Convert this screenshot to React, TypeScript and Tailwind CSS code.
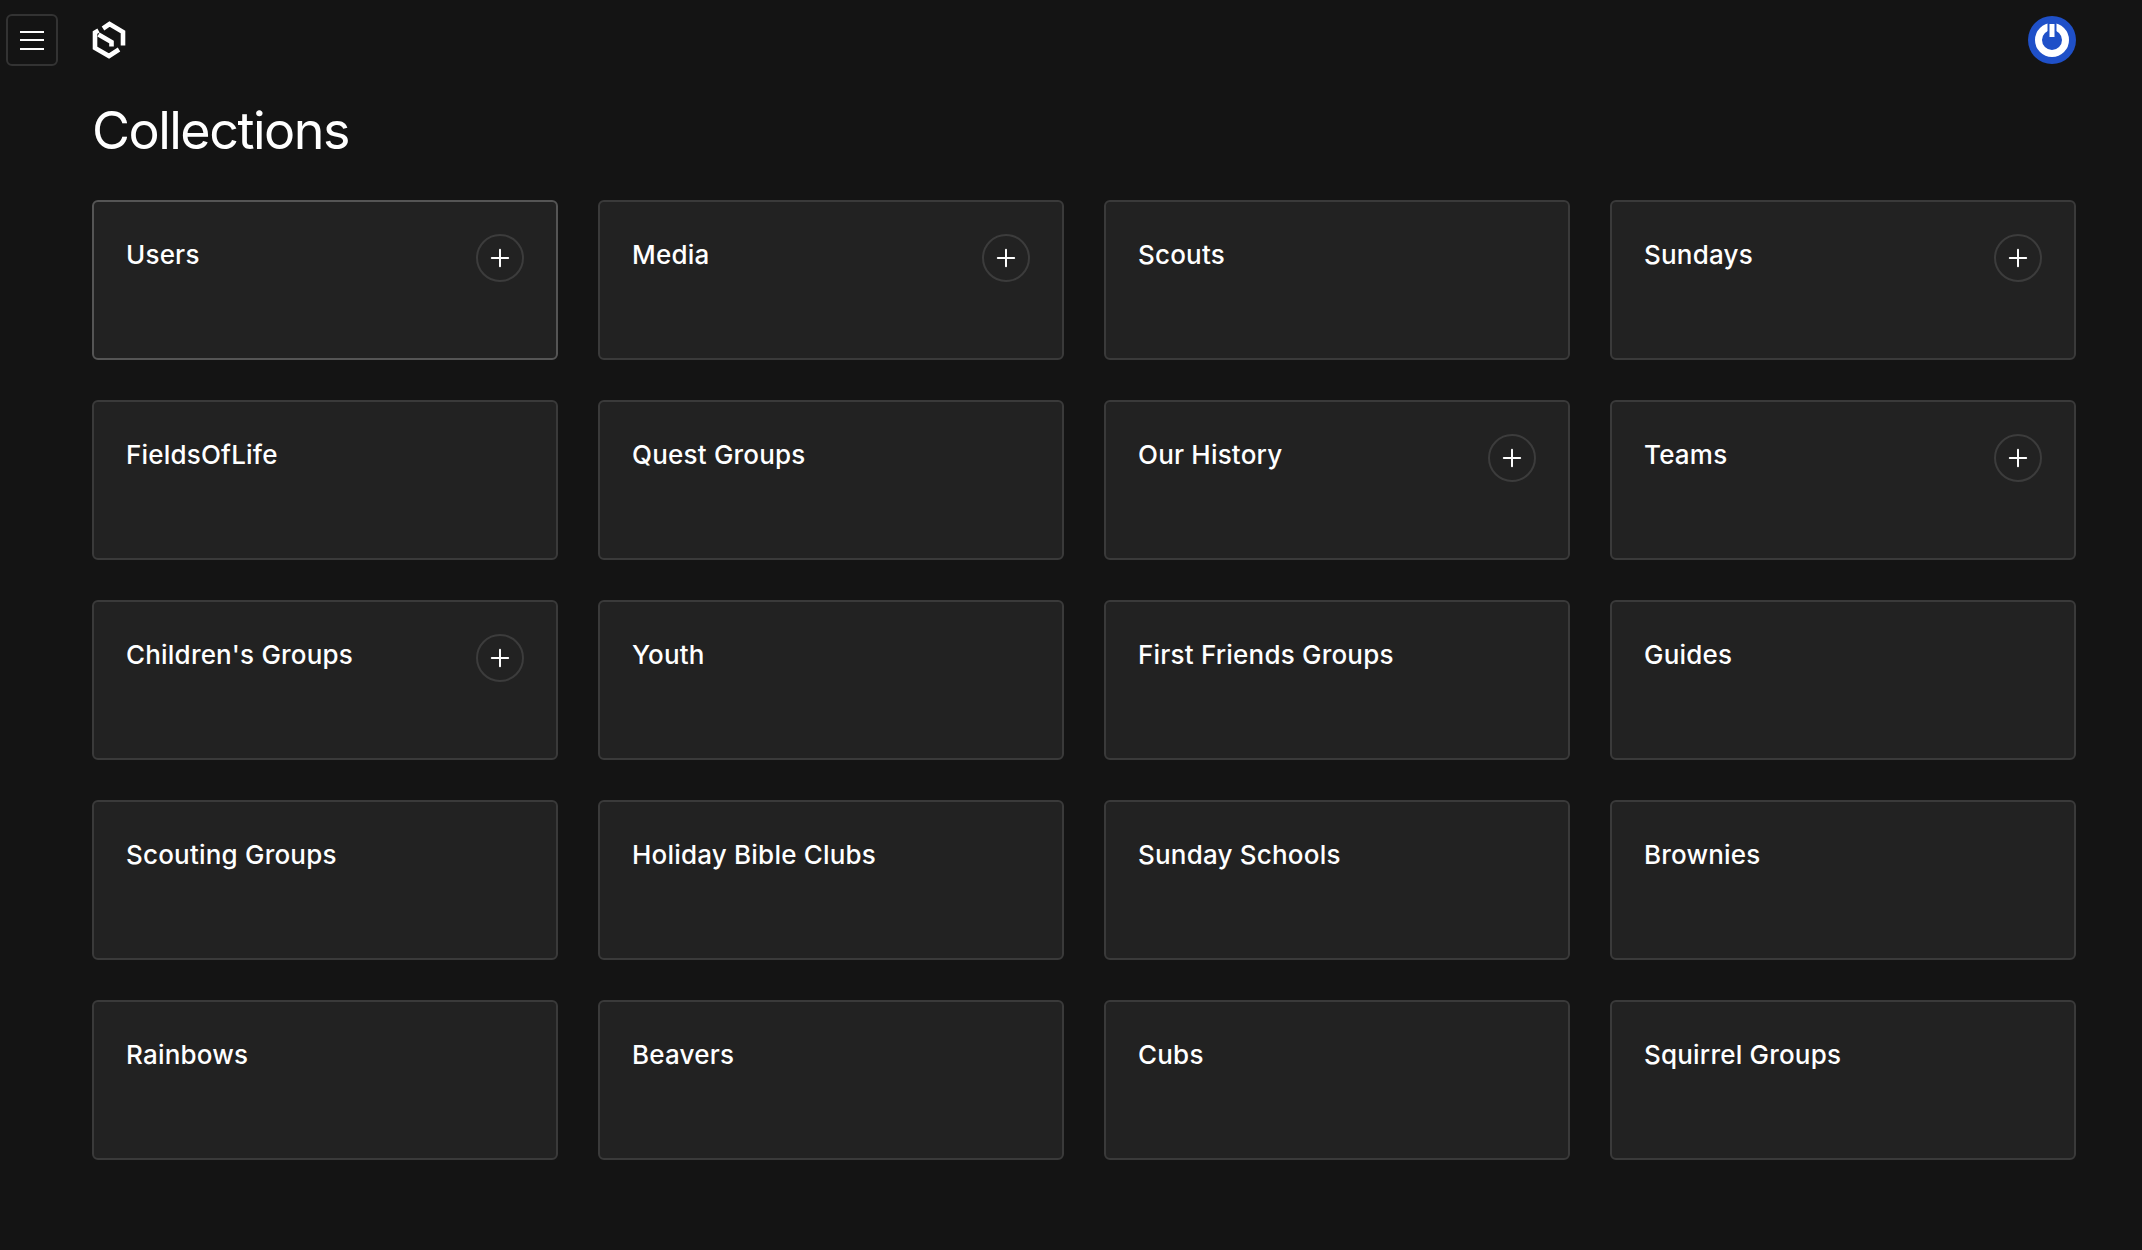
import React from "react";
import { Plus } from "lucide-react";

const collections = [
  { name: "Users", canCreate: true, active: true },
  { name: "Media", canCreate: true },
  { name: "Scouts" },
  { name: "Sundays", canCreate: true },
  { name: "FieldsOfLife" },
  { name: "Quest Groups" },
  { name: "Our History", canCreate: true },
  { name: "Teams", canCreate: true },
  { name: "Children's Groups", canCreate: true },
  { name: "Youth" },
  { name: "First Friends Groups" },
  { name: "Guides" },
  { name: "Scouting Groups" },
  { name: "Holiday Bible Clubs" },
  { name: "Sunday Schools" },
  { name: "Brownies" },
  { name: "Rainbows" },
  { name: "Beavers" },
  { name: "Cubs" },
  { name: "Squirrel Groups" },
];

const Logo = () => (
  <svg width="34" height="38" viewBox="0 0 34 38" fill="none" stroke="white" strokeWidth="4.6">
    <path d="M11 7.5 L17.5 3 L31 11 L31 24.5" />
    <path d="M27 28.5 L17 35 L3 27 L3 11.5 L6.5 9.5" />
    <path d="M6.5 13.5 L19.5 21 L19.5 25.5" />
  </svg>
);

const Avatar = () => (
  <svg width="48" height="48" viewBox="0 0 48 48" fill="none">
    <circle cx="24" cy="24" r="24" fill="#1f50c8" />
    <circle cx="24" cy="24" r="13.5" stroke="white" strokeWidth="7" />
    <path d="M24 7 V25" stroke="#1f50c8" strokeWidth="9" />
    <path d="M24 8 V21" stroke="white" strokeWidth="5" />
  </svg>
);

export default function App() {
  return (
    <div className="min-h-[1250px] bg-[#141414] text-white font-['Inter',sans-serif]">
      <header className="flex items-center h-20 pl-[6px] pr-[66px]">
        <button className="w-[52px] h-[52px] flex flex-col items-center justify-center gap-[6.5px] rounded-md border-2 border-[#333333]">
          <span className="w-6 h-[2px] bg-white" />
          <span className="w-6 h-[2px] bg-white" />
          <span className="w-6 h-[2px] bg-white" />
        </button>
        <div className="ml-[34px]">
          <Logo />
        </div>
        <div className="ml-auto">
          <Avatar />
        </div>
      </header>

      <main className="pl-[92px] pr-[66px] pt-[25px]">
        <h1 className="text-[52px] leading-[52px] font-normal tracking-[-1.5px] mb-[43px]">Collections</h1>
        <div className="grid grid-cols-4 gap-10">
          {collections.map((c) => (
            <div
              key={c.name}
              className={`h-40 flex justify-between items-start p-8 rounded-md border-2 bg-[#222222] ${
                c.active ? "border-[#555555]" : "border-[#3a3a3a]"
              }`}
            >
              <h3 className="text-[26px] leading-[42px] font-medium tracking-[0.2px]">{c.name}</h3>
              {c.canCreate && (
                <button className="w-12 h-12 flex items-center justify-center rounded-full border-2 border-[#3c3c3c]">
                  <Plus size={28} strokeWidth={1.7} />
                </button>
              )}
            </div>
          ))}
        </div>
      </main>
    </div>
  );
}
